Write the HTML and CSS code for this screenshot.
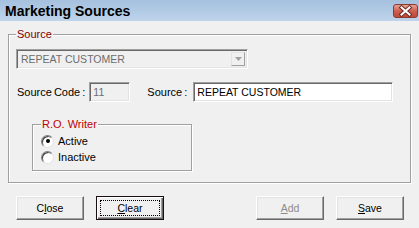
FILE: index.html
```html
<!DOCTYPE html>
<html lang="en">
<head>
  <meta charset="UTF-8" />
  <title>Marketing Sources</title>
  <link rel="stylesheet" href="styles.css">
</head>
<body>
  <div class="titlebar">
    <span class="title">Marketing Sources</span>
    <div class="close-x">
      <svg width="25" height="14" viewBox="0 0 25 14">
        <path d="M8.5 3.5 L16.5 10.5 M16.5 3.5 L8.5 10.5" stroke="#6a2a22" stroke-width="4" stroke-linecap="square"/>
        <path d="M8.5 3.5 L16.5 10.5 M16.5 3.5 L8.5 10.5" stroke="#ffffff" stroke-width="2" stroke-linecap="square"/>
      </svg>
    </div>
  </div>

  <div class="dialog">
    <fieldset class="group">
      <legend class="dark">Source</legend>

      <div class="combo">
        <span class="combo-text">REPEAT CUSTOMER</span>
        <div class="combo-btn">
          <svg width="7" height="4" viewBox="0 0 7 4"><path d="M0 0 H7 L3.5 4 Z" fill="#a0a0a0"/></svg>
        </div>
      </div>

      <div class="row">
        <span class="lbl">Source Code :</span>
        <div class="field code disabled">11</div>
        <span class="lbl src-lbl">Source :</span>
        <div class="field name">REPEAT CUSTOMER</div>
      </div>

      <fieldset class="group writer">
        <legend class="red">R.O. Writer</legend>
        <div class="option"><span class="radio checked"></span>Active</div>
        <div class="option"><span class="radio"></span>Inactive</div>
      </fieldset>
    </fieldset>

    <div class="buttons">
      <button class="btn">C<u>l</u>ose</button>
      <button class="btn btn-default"><span class="focus"><u>C</u>lear</span></button>
      <span class="spacer"></span>
      <button class="btn" disabled><u>A</u>dd</button>
      <button class="btn"><u>S</u>ave</button>
    </div>
  </div>
</body>
</html>
```

FILE: styles.css
```css
body {
  margin: 0;
  width: 419px;
  height: 228px;
  overflow: hidden;
  background: #f0f0f0;
  color: #000;
  font-family: "Liberation Sans", Arial, sans-serif;
  font-size: 11px;
}
.titlebar {
  height: 21px;
  background: linear-gradient(#a5c1de, #bed4eb);
  display: flex;
  align-items: center;
  justify-content: space-between;
  padding: 0 1px 0 5px;
}
.title {
  font-size: 14px;
  font-weight: bold;
}
.close-x {
  width: 25px;
  height: 14px;
  margin-top: 1px;
  box-sizing: border-box;
  border: 1px solid #8c3b31;
  border-radius: 3px;
  background: linear-gradient(#e8a293, #cd5f4e 50%, #c04a38);
  display: flex;
}
.close-x svg {
  margin: -1px;
}
.dialog {
  padding: 7px 8px 0;
}
.group {
  margin: 0;
  padding: 8px 7px 11px;
  border: 1px solid #a0a0a0;
  box-shadow: 1px 1px 0 #fff, inset 1px 1px 0 #fff;
  min-inline-size: 0;
}
.group legend {
  padding: 0 1px;
  line-height: 13px;
  background: #f0f0f0;
}
.dark {
  color: #800000;
}
.red {
  color: #c00000;
}
.combo {
  width: 232px;
  height: 20px;
  box-sizing: border-box;
  border: 1px solid;
  border-color: #a0a0a0 #fff #fff #a0a0a0;
  box-shadow: inset 1px 1px 0 #696969, inset -1px -1px 0 #e3e3e3;
  display: flex;
  align-items: center;
  justify-content: space-between;
  padding: 0 2px 0 4px;
}
.combo-text {
  color: #6d6d6d;
  font-size: 10.5px;
}
.combo-btn {
  width: 14px;
  height: 14px;
  box-sizing: border-box;
  border: 1px solid;
  border-color: #e3e3e3 #a0a0a0 #a0a0a0 #e3e3e3;
  display: flex;
  align-items: center;
  justify-content: center;
}
.row {
  display: flex;
  align-items: center;
  margin-top: 13px;
}
.lbl {
  word-spacing: -1px;
  padding-left: 1px;
}
.src-lbl {
  margin-left: 16px;
}
.field {
  height: 20px;
  box-sizing: border-box;
  border: 1px solid;
  border-color: #a0a0a0 #fff #fff #a0a0a0;
  box-shadow: inset 1px 1px 0 #696969, inset -1px -1px 0 #e3e3e3;
  background: #fff;
  padding: 0 3px;
  line-height: 18px;
  font-size: 10.5px;
}
.code {
  width: 41px;
  margin-left: 4px;
}
.name {
  width: 200px;
  margin-left: 6px;
}
.disabled {
  background: #f0f0f0;
  color: #6d6d6d;
}
.writer {
  width: 160px;
  box-sizing: border-box;
  margin: 16px 0 0 16px;
  padding: 2px 0 5px 8px;
}
.option {
  display: flex;
  align-items: center;
  height: 16px;
}
.radio {
  width: 13px;
  height: 13px;
  box-sizing: border-box;
  border-radius: 50%;
  border: 1px solid;
  border-color: #808080 #e3e3e3 #e3e3e3 #808080;
  box-shadow: inset 1px 1px 0 #404040;
  background: #fff;
  margin-right: 4px;
  display: flex;
  align-items: center;
  justify-content: center;
}
.radio.checked::after {
  content: "";
  width: 4px;
  height: 4px;
  border-radius: 50%;
  background: #000;
}
.buttons {
  display: flex;
  margin-top: 13px;
  padding: 0 7px 0 8px;
  gap: 12px;
}
.spacer {
  flex: 1;
}
.btn {
  width: 68px;
  height: 24px;
  box-sizing: border-box;
  padding: 0;
  font: inherit;
  font-size: 10.5px;
  color: #000;
  background: #f0f0f0;
  border: 1px solid;
  border-color: #fff #696969 #696969 #fff;
  box-shadow: inset -1px -1px 0 #a0a0a0, inset 1px 1px 0 #e3e3e3;
  display: flex;
  align-items: center;
  justify-content: center;
}
.btn:disabled {
  color: #8d8d8d;
}
.btn-default {
  border: 1px solid #1a0d0d;
  box-shadow: inset 1px 1px 0 #fff, inset -1px -1px 0 #696969, inset -2px -2px 0 #a0a0a0;
  padding: 3px;
}
.focus {
  flex: 1;
  align-self: stretch;
  border: 1px dotted #000;
  display: flex;
  align-items: center;
  justify-content: center;
}
```
